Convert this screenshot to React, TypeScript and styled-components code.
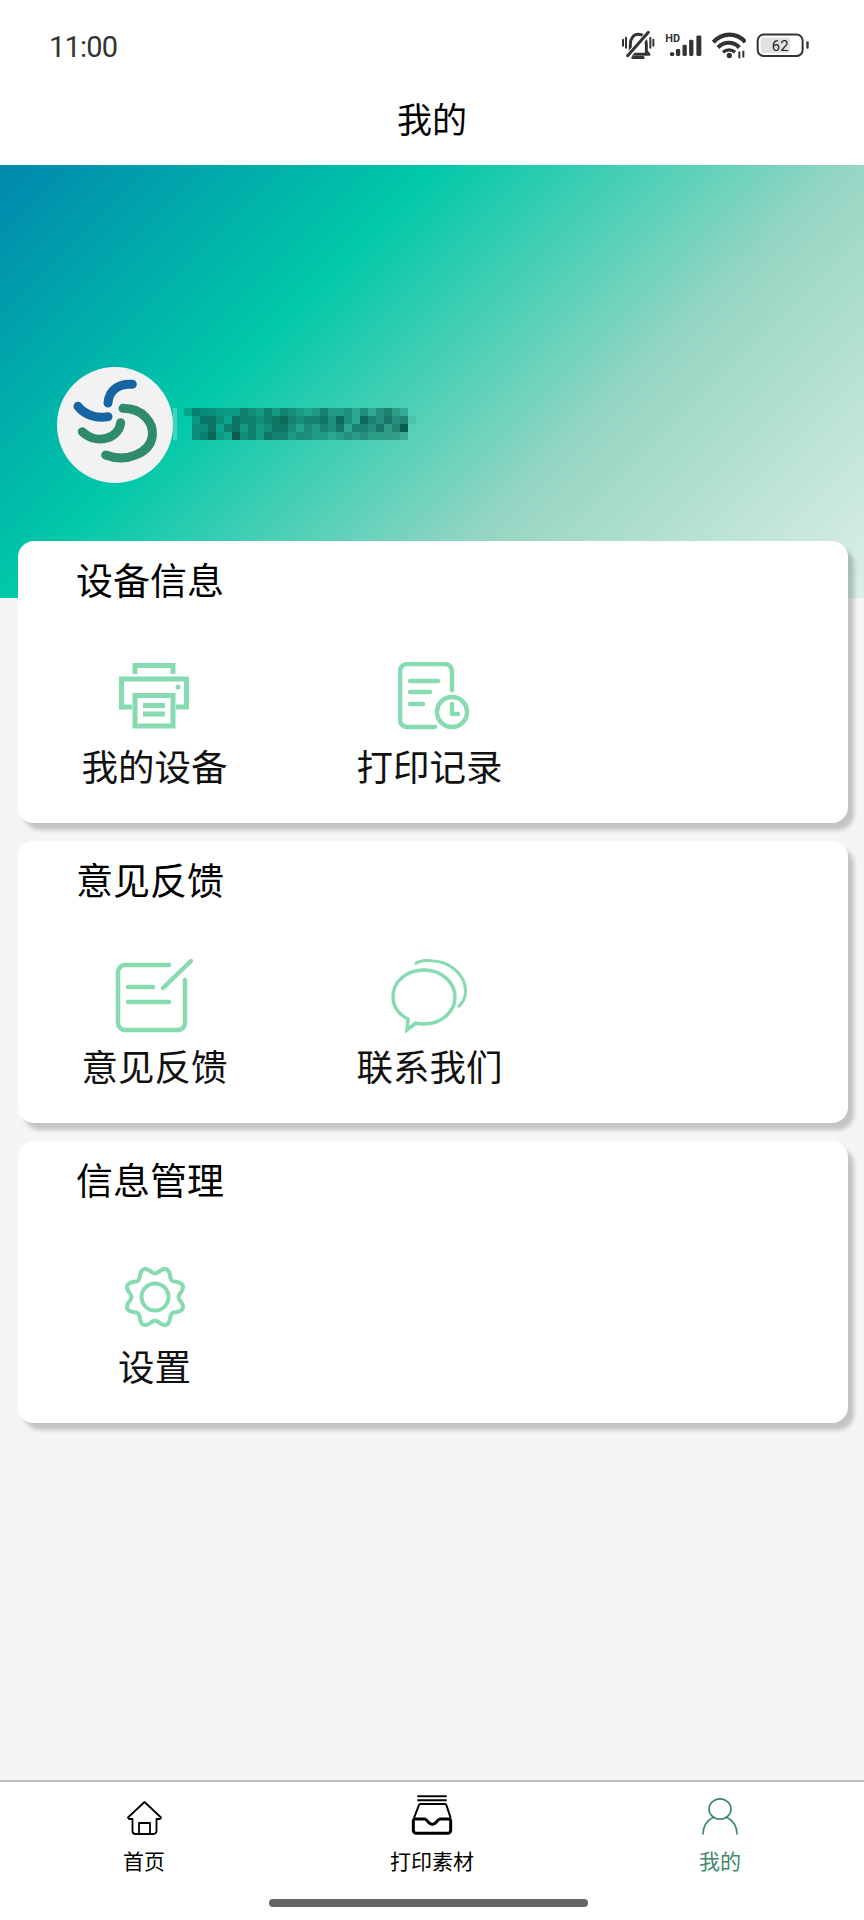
import React from "react";
import styled, { createGlobalStyle } from "styled-components";

const Global = createGlobalStyle`
  html, body { margin: 0; padding: 0; background: #f5f5f5; }
  * { box-sizing: border-box; }
  body { font-family: "Noto Sans CJK SC", "Noto Sans", sans-serif; }
`;

const Page = styled.div`
  width: 864px;
  height: 1920px;
  display: flex;
  flex-direction: column;
  background: #f5f5f5;
  overflow: hidden;
`;
const Header = styled.header`
  background: #fff;
  height: 165px;
  display: flex;
  flex-direction: column;
`;
const StatusBar = styled.div`
  height: 75px;
  padding: 15px 55px 0 49px;
  display: flex;
  align-items: center;
  justify-content: space-between;
`;
const Time = styled.span`
  padding-top: 3px;
  font-family: Roboto, sans-serif;
  font-size: 29px;
  letter-spacing: -0.8px;
  color: #333;
`;
const StatusIcons = styled.div`
  display: flex;
  align-items: center;
  gap: 10px;
`;
const PageTitle = styled.h1`
  margin: 0;
  padding-bottom: 5px;
  flex: 1;
  display: flex;
  align-items: center;
  justify-content: center;
  font-size: 35px;
  font-weight: 400;
  color: #000;
`;
const Banner = styled.section`
  height: 433px;
  padding: 202px 0 0 57px;
  display: flex;
  align-items: flex-start;
  background: linear-gradient(
    135deg,
    #0088ae 0%,
    #00c9a8 33.6%,
    #98d6c4 66.6%,
    #dcefe6 100%
  );
`;
const Avatar = styled.div`
  width: 116px;
  height: 116px;
  border-radius: 50%;
  background: #f2f2f2;
  flex: none;
`;
const Redaction = styled.svg`
  margin-top: 40px;
  flex: none;
`;
const Cards = styled.main`
  margin-top: -57px;
  padding: 0 16px 0 18px;
  display: flex;
  flex-direction: column;
  gap: 18px;
`;
const Card = styled.section`
  height: 282px;
  background: #fff;
  border-radius: 16px;
  padding-top: 20px;
  box-shadow: 6px 7px 4px rgba(0, 0, 0, 0.2);
`;
const CardTitle = styled.h2`
  margin: 0;
  padding-left: 58px;
  font-size: 37px;
  line-height: 37px;
  font-weight: 400;
  color: #000;
`;
const Items = styled.div`
  margin: 59px 0 0 -1px;
  display: grid;
  grid-template-columns: repeat(3, 275px);
`;
const Item = styled.div`
  display: flex;
  flex-direction: column;
  align-items: center;
`;
const IconSlot = styled.div<{ $nudge?: number }>`
  height: 78px;
  margin-left: ${(p) => p.$nudge ?? 0}px;
  display: flex;
  align-items: center;
  justify-content: center;
`;
const ItemLabel = styled.span`
  margin-top: 9px;
  font-size: 36.5px;
  line-height: 44px;
  color: #111;
`;
const Nav = styled.nav`
  margin-top: auto;
  height: 140px;
  background: #fff;
  border-top: 2px solid #bdbdbd;
  display: flex;
  flex-direction: column;
`;
const Tabs = styled.div`
  padding-top: 13px;
  display: grid;
  grid-template-columns: repeat(3, 288px);
`;
const Tab = styled.div`
  display: flex;
  flex-direction: column;
  align-items: center;
`;
const TabIcon = styled.div`
  height: 40px;
  display: flex;
  align-items: flex-end;
  justify-content: center;
`;
const TabLabel = styled.span<{ $active?: boolean }>`
  margin-top: 13px;
  font-size: 21px;
  line-height: 24px;
  color: ${(p) => (p.$active ? "#3f8a6b" : "#000")};
`;
const HomePill = styled.div`
  margin: 27px 0 0 269px;
  width: 319px;
  height: 8px;
  border-radius: 4px;
  background: #666;
`;

const MINT = "#86dbb0";

const BellMuted = () => (
  <svg width="34" height="28" viewBox="65 38 100 84" fill="none">
    <path d="M92 100V78c0-18 10-30 24-30s24 12 24 30v22l8 8H84z" stroke="#333" strokeWidth="9" strokeLinejoin="round" />
    <path d="M100 118h30" stroke="#333" strokeWidth="10" strokeLinecap="round" />
    <path d="M80 118L152 38" stroke="#fff" strokeWidth="17" />
    <path d="M84 112L146 42" stroke="#333" strokeWidth="9" strokeLinecap="round" />
    <path d="M70 64v18M79 58v30M152 58v30M161 64v18" stroke="#333" strokeWidth="6" strokeLinecap="round" />
  </svg>
);
const Signal = () => (
  <svg width="37" height="24" viewBox="190 40 112 72">
    <text x="191" y="67" fontFamily="Roboto, sans-serif" fontWeight="700" fontSize="33" fill="#333">HD</text>
    <rect x="205" y="98" width="13" height="11" rx="4" fill="#333" />
    <rect x="223" y="88" width="13" height="21" rx="4" fill="#333" />
    <rect x="243" y="75" width="13" height="34" rx="4" fill="#333" />
    <rect x="263" y="60" width="13" height="49" rx="4" fill="#333" />
    <rect x="285" y="47" width="15" height="62" rx="4" fill="#333" />
  </svg>
);
const Wifi = () => (
  <svg width="34" height="27" viewBox="332 40 102 80" fill="none">
    <path d="M336 70c28-30 70-30 96 0" stroke="#333" strokeWidth="13" />
    <path d="M350 86c18-19 46-19 64 0" stroke="#333" strokeWidth="12" />
    <path d="M365 100c10-9 26-9 36 0" stroke="#333" strokeWidth="10" />
    <circle cx="384" cy="110" r="8" fill="#333" />
    <path d="M414 98v20M426 96v20" stroke="#333" strokeWidth="6" />
  </svg>
);
const Battery = () => (
  <svg width="53" height="24" viewBox="468 42 158 70">
    <rect x="482" y="55" width="88" height="46" rx="8" fill="#e2e2e2" />
    <rect x="473" y="46" width="134" height="64" rx="18" fill="none" stroke="#333" strokeWidth="6" />
    <rect x="618" y="66" width="7" height="22" rx="3" fill="#333" />
    <text x="540" y="95" textAnchor="middle" fontFamily="Roboto, sans-serif" fontSize="44" fill="#222">62</text>
  </svg>
);

const Logo = () => (
  <svg width="116" height="116" viewBox="52 52 348 348" fill="none" strokeWidth="27" strokeLinecap="round">
    <path d="M278 104C240 100 208 120 205 160" stroke="#1565a5" />
    <path d="M115 170C135 195 170 208 205 201" stroke="#1565a5" />
    <path d="M250 176C310 176 342 220 338 258C332 310 260 340 198 316" stroke="#2e8b6e" />
    <path d="M243 219C240 262 175 290 128 246" stroke="#2e8b6e" />
  </svg>
);

const BLUR_ROWS = [
  "36554446546465434644535356430",
  "04775376656786566758538657561",
  "05573674645775354657366574690",
  "05684395647664554434545444430",
];
const BlurredName = () => (
  <Redaction width="244" height="34" viewBox="0 0 244 32" shapeRendering="crispEdges">
    <rect x="0" y="0" width="4" height="32" fill="#fff" fillOpacity="0.25" />
    {BLUR_ROWS.map((row, y) =>
      row.split("").map((v, x) => (
        <rect key={`${x}-${y}`} x={11 + x * 8} y={y * 8} width="8" height="8" fill="#0a5c50" fillOpacity={Number(v) / 9} />
      ))
    )}
  </Redaction>
);

const PrinterIcon = () => (
  <svg width="72" height="66" viewBox="0 0 72 66" fill="none" stroke={MINT} strokeWidth="5">
    <path d="M16 11V2.5H54V11" />
    <path d="M13 44H2.5V16H67.5V44H57" />
    <rect x="16" y="32.5" width="38" height="30.5" />
    <path d="M24 42.5H46M24 51H46" />
    <circle cx="59" cy="24" r="2.5" fill={MINT} stroke="none" />
  </svg>
);
const RecordIcon = () => (
  <svg width="72" height="68" viewBox="0 0 72 68" fill="none" stroke={MINT} strokeWidth="4.5" strokeLinecap="round" strokeLinejoin="round">
    <path d="M37 65H9a7 7 0 0 1-7-7V9a7 7 0 0 1 7-7h38a7 7 0 0 1 7 7v19" />
    <path d="M12 19H40M12 30H32M12 42H25" />
    <circle cx="54" cy="50" r="15" />
    <path d="M54 42V52H60" />
  </svg>
);
const FeedbackIcon = () => (
  <svg width="78" height="75" viewBox="0 0 78 75" fill="none" stroke={MINT} strokeWidth="4.5" strokeLinecap="round">
    <path d="M54 6H10a7 7 0 0 0-7 7v51a7 7 0 0 0 7 7h53a7 7 0 0 0 7-7V21" />
    <path d="M48 29L76 2" />
    <path d="M13 28H38M13 43H54" />
  </svg>
);
const ChatIcon = () => (
  <svg width="76" height="74" viewBox="0 0 76 74" fill="none" stroke={MINT} strokeWidth="3.5">
    <path d="M25 64L16 71L17 60C7 55 2 47 2 38C2 22 16 11 33 11C50 11 64 23 64 38C64 53 50 65 33 65C30 65 27 65 25 64Z" />
    <path d="M24 5C28 2 34 1 40 1.8C58 2 74.5 15 74.5 32C74.5 38 72 44 67 48" strokeWidth="3" />
  </svg>
);
const gearPath = (() => {
  const pts: string[] = [];
  for (let i = 0; i < 240; i++) {
    const t = (i / 240) * Math.PI * 2;
    const r = 26.8 - 3.2 * Math.cos(8 * t);
    pts.push(`${(31 + r * Math.cos(t)).toFixed(2)},${(31 + r * Math.sin(t)).toFixed(2)}`);
  }
  return `M${pts.join("L")}Z`;
})();
const GearIcon = () => (
  <svg width="62" height="62" viewBox="0 -1 62 62" overflow="visible" fill="none" stroke={MINT} strokeWidth="4">
    <path d={gearPath} strokeLinejoin="round" />
    <circle cx="31" cy="31" r="13.5" />
  </svg>
);

const HomeIcon = () => (
  <svg width="35" height="34" viewBox="0 0 35 34" fill="none" stroke="#000" strokeWidth="1.8" strokeLinejoin="round">
    <path d="M17.5 1L1 16.5L2 18H5.5V30a3 3 0 0 0 3 3H26.5a3 3 0 0 0 3-3V18H33L34 16.5Z" />
    <path d="M12 33V22H23V33" />
  </svg>
);
const TrayIcon = () => (
  <svg width="42" height="40" viewBox="92 46 124 120" fill="none" stroke="#000">
    <path d="M110 50H198M110 62H198" strokeWidth="6" />
    <path d="M116 73H196M116 73L100 115M196 73L210 115" strokeWidth="6" />
    <path d="M98 122a5 5 0 0 1 5-4H132c8 0 10 16 23 16s15-16 23-16H205a5 5 0 0 1 5 4V152a9 9 0 0 1-9 9H107a9 9 0 0 1-9-9Z" strokeWidth="9" strokeLinejoin="round" />
  </svg>
);
const PersonIcon = () => (
  <svg width="36" height="37" viewBox="0 0 36 37" fill="none" stroke="#3f8a6b" strokeWidth="1.7">
    <ellipse cx="18" cy="11" rx="11" ry="10.2" />
    <path d="M1 36.5C1 27 6 22 11 19.5M35 36.5C35 27 30 22 25 19.5" />
  </svg>
);

const sections = [
  {
    title: "设备信息",
    items: [
      { label: "我的设备", icon: <PrinterIcon /> },
      { label: "打印记录", icon: <RecordIcon />, nudge: 8 },
    ],
  },
  {
    title: "意见反馈",
    items: [
      { label: "意见反馈", icon: <FeedbackIcon />, nudge: -2 },
      { label: "联系我们", icon: <ChatIcon />, nudge: -2 },
    ],
  },
  {
    title: "信息管理",
    items: [{ label: "设置", icon: <GearIcon /> }],
  },
];

export default function App() {
  return (
    <Page>
      <Global />
      <Header>
        <StatusBar>
          <Time>11:00</Time>
          <StatusIcons>
            <BellMuted />
            <Signal />
            <Wifi />
            <Battery />
          </StatusIcons>
        </StatusBar>
        <PageTitle>我的</PageTitle>
      </Header>
      <Banner>
        <Avatar>
          <Logo />
        </Avatar>
        <BlurredName />
      </Banner>
      <Cards>
        {sections.map((s) => (
          <Card key={s.title}>
            <CardTitle>{s.title}</CardTitle>
            <Items>
              {s.items.map((it) => (
                <Item key={it.label}>
                  <IconSlot $nudge={it.nudge}>{it.icon}</IconSlot>
                  <ItemLabel>{it.label}</ItemLabel>
                </Item>
              ))}
            </Items>
          </Card>
        ))}
      </Cards>
      <Nav>
        <Tabs>
          <Tab>
            <TabIcon><HomeIcon /></TabIcon>
            <TabLabel>首页</TabLabel>
          </Tab>
          <Tab>
            <TabIcon><TrayIcon /></TabIcon>
            <TabLabel>打印素材</TabLabel>
          </Tab>
          <Tab>
            <TabIcon><PersonIcon /></TabIcon>
            <TabLabel $active>我的</TabLabel>
          </Tab>
        </Tabs>
        <HomePill />
      </Nav>
    </Page>
  );
}
